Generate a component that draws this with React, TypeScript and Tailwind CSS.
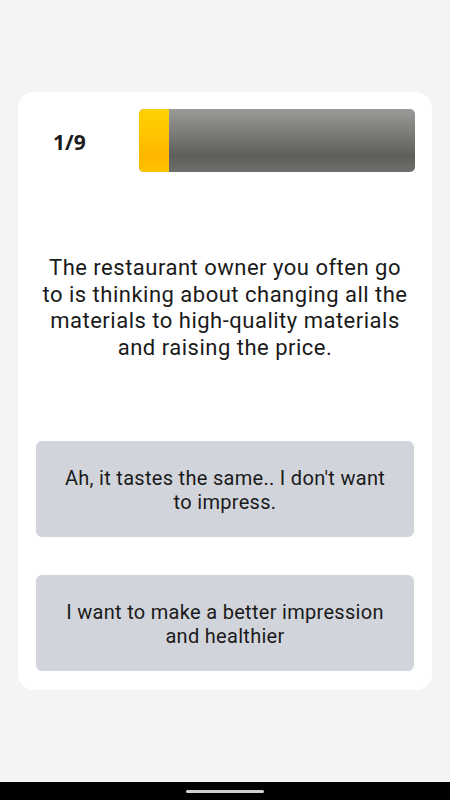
import React from "react";

const options = [
  "Ah, it tastes the same.. I don't want to impress.",
  "I want to make a better impression and healthier",
];

export default function App() {
  return (
    <div className="flex h-[800px] flex-col bg-[#f3f4f6] font-['Roboto',sans-serif] text-[#1a1a1a]">
      <div className="flex-1">
        <div className="mx-[18px] mt-[92px] rounded-2xl bg-white px-[18px] pb-[19px] pt-[17px]">
          <div className="flex items-center">
            <div className="w-[103px] pl-[17px] pt-[4px] font-['Open_Sans',sans-serif] text-[21px] font-bold">1/9</div>
            <div className="mr-[-1px] flex h-[63px] flex-1 overflow-hidden rounded-[5px] bg-[linear-gradient(to_bottom,#9a9a98,#5e5f5b_75%,#6e6f6b)]">
              <div className="w-[30px] bg-[linear-gradient(to_bottom,#ffd200,#ffb700_75%,#ffc400)]" />
            </div>
          </div>

          <p className="mx-auto mt-[83px] px-[6px] text-center text-[22px] leading-[26.5px] tracking-[0.5px]">
            The restaurant owner you often go to is thinking about changing all the materials to high-quality materials and raising the price.
          </p>

          <div className="mt-[80px] flex flex-col gap-[38px]">
            {options.map((o) => (
              <button
                key={o}
                className="flex h-[96px] items-center justify-center rounded-[6px] bg-[#d1d5db] px-[24px] pt-[2px] text-center text-[20px] leading-[24px] tracking-[0.3px]"
              >
                {o}
              </button>
            ))}
          </div>
        </div>
      </div>
      <div className="flex h-[18px] items-center justify-center bg-black">
        <div className="h-[3px] w-[78px] rounded-full bg-[#d0d0d0]" />
      </div>
    </div>
  );
}
